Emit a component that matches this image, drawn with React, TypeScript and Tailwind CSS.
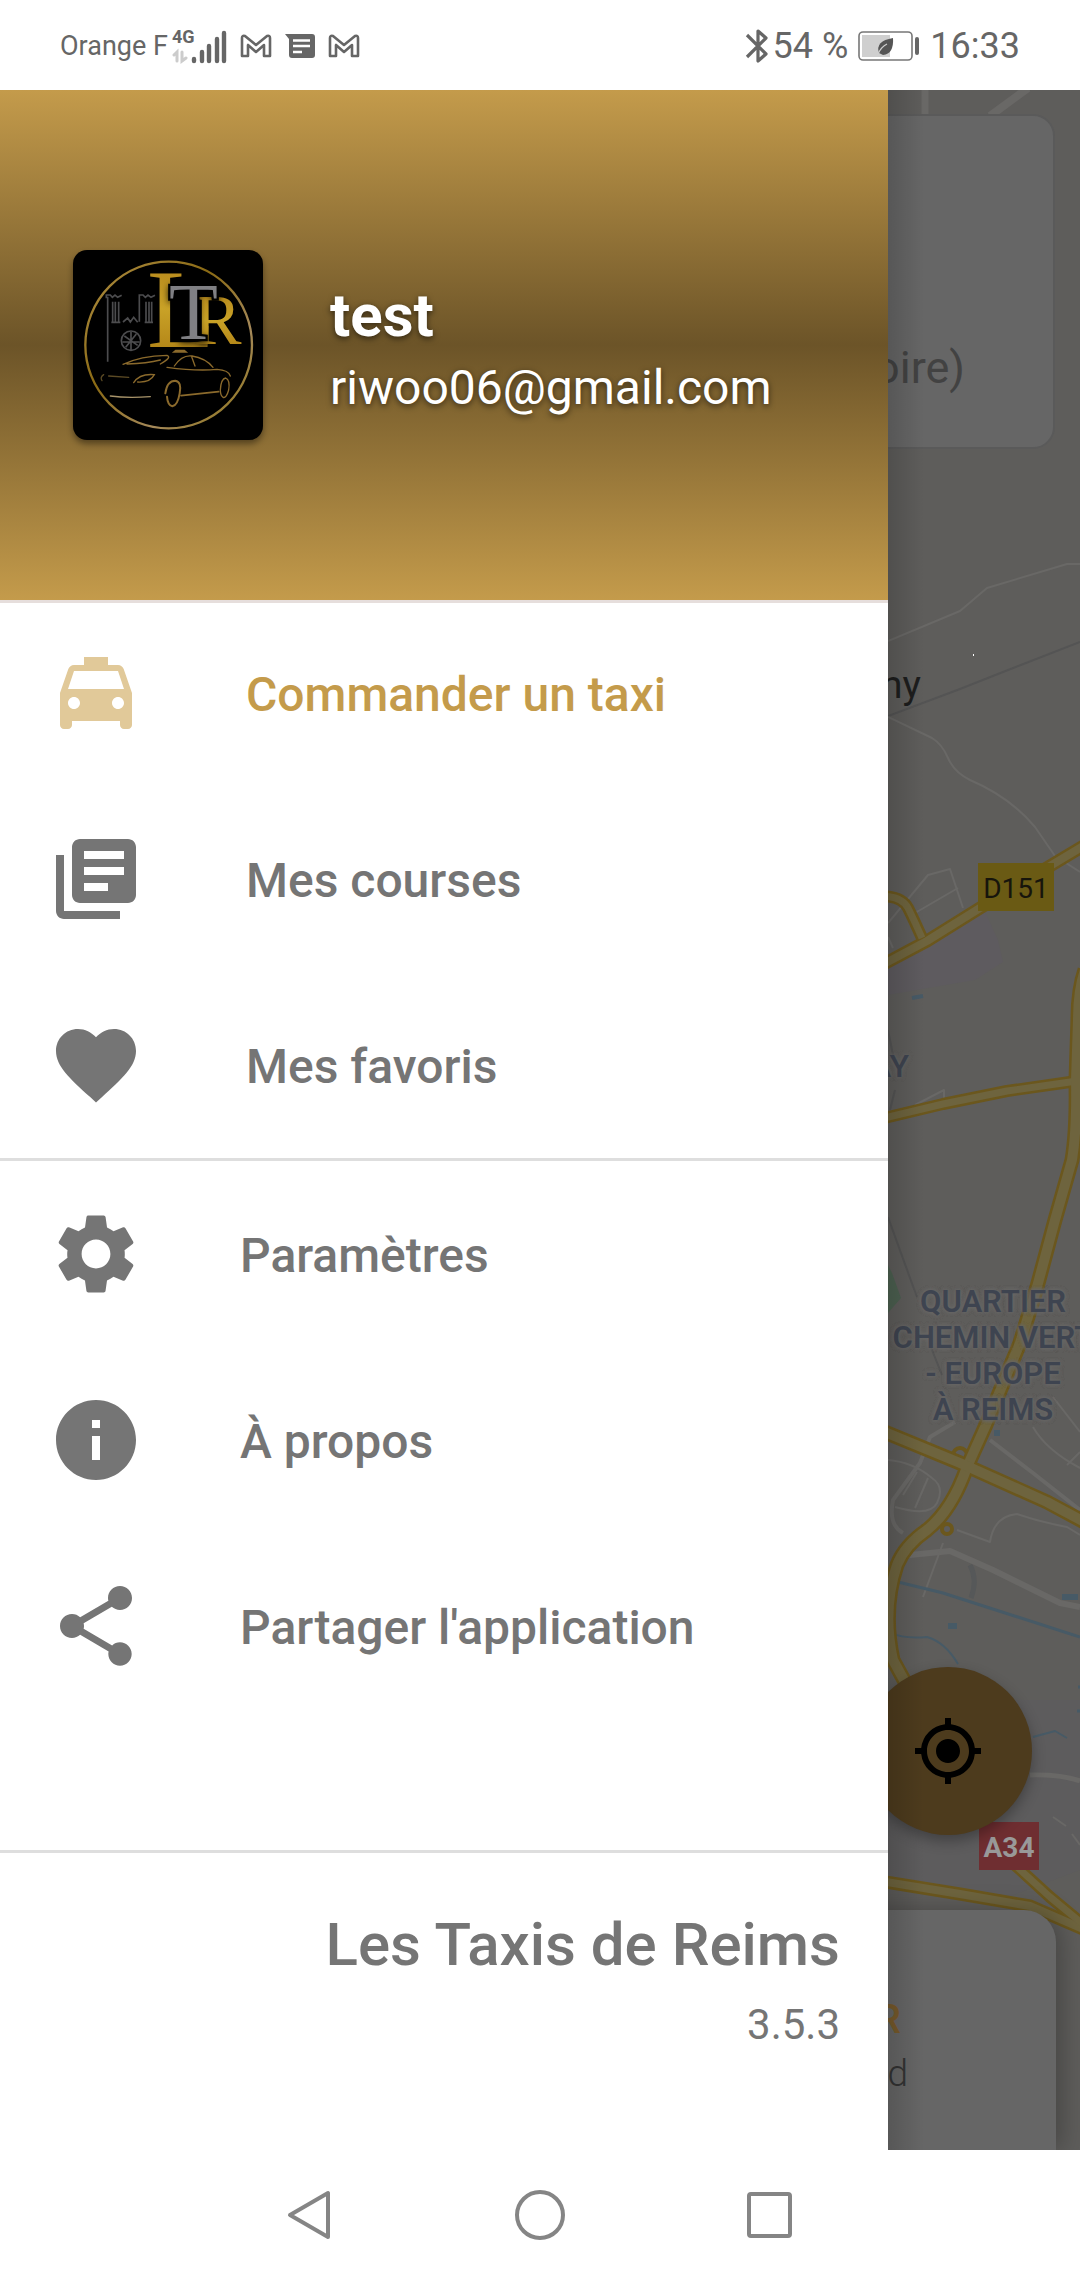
import type { ReactNode } from 'react';
import type { IconType } from 'react-icons';
import {
  MdFavorite,
  MdGpsFixed,
  MdInfo,
  MdLibraryBooks,
  MdLocalTaxi,
  MdSettings,
  MdShare,
} from 'react-icons/md';

type MenuItem = { label: string; icon: IconType; active?: boolean };

const coursesItems: MenuItem[] = [
  { label: 'Commander un taxi', icon: MdLocalTaxi, active: true },
  { label: 'Mes courses', icon: MdLibraryBooks },
  { label: 'Mes favoris', icon: MdFavorite },
];

const appItems: MenuItem[] = [
  { label: 'Paramètres', icon: MdSettings },
  { label: 'À propos', icon: MdInfo },
  { label: "Partager l'application", icon: MdShare },
];

// Routes principales (contour + remplissage)
const roads = [
  { d: 'M880 966 L927 941 L980 908 L1090 842', w: 13 },
  { d: 'M880 896 Q902 896 908 908 T922 938', w: 12 },
  { d: 'M880 1119 L943 1104 L1007 1091 L1077 1081', w: 12 },
  { d: 'M1085 970 Q1078 990 1078 1020 L1076 1080 Q1077 1130 1072 1160 L1055 1220 L1037 1287 L1020 1343 L985 1427 L967 1467 Q952 1510 927 1530 Q905 1545 897 1565 Q882 1610 893 1660 L915 1700', w: 15 },
  { d: 'M880 1430 L960 1463 L1047 1502 L1090 1525', w: 15 },
  { d: 'M880 1881 L960 1894 L1030 1906 L1090 1932', w: 13 },
  { d: 'M1015 1865 L1050 1897 L1090 1930', w: 12 },
];

const streets = [
  { d: 'M925 88 V116', w: 7 },
  { d: 'M990 116 L1028 88', w: 8 },
  { d: 'M888 641 L960 611 L987 588 L1067 564 H1080', w: 2 },
  { d: 'M888 717 L932 738 Q942 744 948 758 T970 780 Q1010 797 1035 827 L1055 856 L1080 872', w: 2 },
  { d: 'M888 923 L928 875 L950 869 L963 908 M915 913 L958 888 M888 937 L893 948', w: 2 },
  { d: 'M915 1105 L944 1090 V1100', w: 2 },
  { d: 'M990 1440 L1033 1473 L1080 1510', w: 4 },
  { d: 'M1033 1427 Q1046 1450 1080 1468 M1053 1397 L1080 1432 M1080 1452 L1067 1465', w: 2 },
  { d: 'M955 1422 L930 1437 L920 1463 L893 1500 Q888 1525 903 1533', w: 4 },
  { d: 'M888 1460 Q913 1462 932 1478 Q945 1487 937 1503 Q930 1517 895 1507 M928 1478 L915 1508 M917 1472 L903 1495', w: 2 },
  { d: 'M957 1530 L990 1542 Q994 1516 1017 1514 Q1040 1522 1067 1527 L1080 1535', w: 2 },
  { d: 'M900 1556 L950 1551 L993 1570 L1060 1603 L1080 1607', w: 6 },
  { d: 'M943 1543 L923 1597', w: 2 },
  { d: 'M1030 1775 Q1060 1774 1080 1781', w: 5 },
  { d: 'M1053 1817 L1066 1826 M1072 1834 L1080 1845', w: 2 },
];

const rivers = [
  { d: 'M898 1582 L943 1593 L1080 1637', w: 3 },
  { d: 'M893 1633 Q902 1639 927 1637 Q945 1642 958 1664', w: 2 },
  { d: 'M1033 1737 L1055 1731 L1067 1738', w: 2 },
  { d: 'M912 998 L923 996', w: 4 },
  { d: 'M948 1626 H957 M994 1433 H1000 M1062 1597 H1078', w: 6 },
  { d: 'M1078 1687 H1080 M1077 1711 H1080', w: 3 },
];

function MapCanvas() {
  return (
    <svg
      className="absolute inset-0 h-full w-full"
      viewBox="888 90 192 2060"
      preserveAspectRatio="xMinYMin slice"
      aria-hidden="true"
    >
      <rect x="888" y="90" width="192" height="2060" fill="#5e5d5b" />
      <path d="M888 965 L985 912 L998 940 L1003 962 L975 980 L888 995 Z" fill="#5e5b5f" />
      <path d="M888 1700 H1080 V1870 L1000 1900 L888 1880 Z" fill="#5d5c5d" />
      <path d="M888 1265 L892 1273 L901 1298 L888 1313 Z" fill="#4c6050" />
      <g fill="none" stroke="#545454" strokeWidth="2">
        <path d="M888 716 L960 689 L1003 672 L1080 642" />
        <path d="M888 1217 L910 1278 L917 1297 M930 1345 L942 1375 M888 1030 L893 1055 M890 1110 L895 1090" />
        <path d="M970 1565 Q978 1580 971 1598" strokeWidth="5" stroke="#565859" />
      </g>
      <g fill="none" stroke="#696866" strokeLinejoin="round">
        {streets.map((s) => (
          <path key={s.d} d={s.d} strokeWidth={s.w} />
        ))}
      </g>
      <g fill="none" stroke="#475a66" strokeLinejoin="round">
        {rivers.map((r) => (
          <path key={r.d} d={r.d} strokeWidth={r.w} />
        ))}
      </g>
      <g fill="none" stroke="#6b571d" strokeLinejoin="round">
        {roads.map((r) => (
          <path key={r.d} d={r.d} strokeWidth={r.w} />
        ))}
        <circle cx="960" cy="1455" r="7" strokeWidth="4" />
        <circle cx="947" cy="1529" r="5" strokeWidth="4" />
      </g>
      <g fill="none" stroke="#6e643e" strokeLinejoin="round">
        {roads.map((r) => (
          <path key={r.d} d={r.d} strokeWidth={r.w - 5} />
        ))}
      </g>
      <rect x="973" y="654" width="1" height="2" fill="#fff" />
    </svg>
  );
}

function MapLabel({ className, children }: { className: string; children: ReactNode }) {
  return <span className={`absolute whitespace-nowrap ${className}`}>{children}</span>;
}

function MapBackground() {
  return (
    <section className="relative flex-1 overflow-hidden bg-[#5e5d5b]" aria-label="Carte">
      <MapCanvas />

      <div className="absolute top-[24px] right-[25px] -left-10 h-[335px] rounded-[22px] border-2 border-[#5a5a5a] bg-[#666666]" />
      <MapLabel className="top-[251px] right-[115px] text-[45px] leading-[54px] text-[#424242]">oire)</MapLabel>
      <MapLabel className="top-[570px] right-[159px] text-[39px] leading-[50px] text-[#1d1d1d]">ny</MapLabel>
      <MapLabel className="top-[773px] left-[90px] flex h-[48px] w-[76px] items-center justify-center bg-[#6a5a14] pt-1 text-[28px] text-[#17150c]">
        D151
      </MapLabel>
      <MapLabel className="top-[958px] right-[171px] text-[32px] leading-[36px] font-medium text-[#3e4450] [text-shadow:0_0_4px_#676665,0_0_4px_#676665]">
        AY
      </MapLabel>
      <p className="absolute top-[1194px] left-[105px] -translate-x-1/2 text-center text-[31px] leading-[36px] font-semibold whitespace-nowrap text-[#3e4450] [text-shadow:0_0_4px_#676665,0_0_4px_#676665,0_0_4px_#676665]">
        QUARTIER
        <br />
        CHEMIN VERT
        <br />
        - EUROPE
        <br />À REIMS
      </p>
      <MapLabel className="top-[1732px] left-[91px] flex h-[48px] w-[60px] items-center justify-center bg-[#6f2e31] pt-1 text-[28px] font-bold text-[#999999]">
        A34
      </MapLabel>

      <button
        type="button"
        aria-label="Ma position"
        className="absolute top-[1577px] -left-6 flex h-[168px] w-[168px] items-center justify-center rounded-full bg-[#4d3b1d] shadow-[0_6px_14px_rgba(0,0,0,0.3)]"
      >
        <MdGpsFixed className="size-[72px] text-black" />
      </button>

      <div className="absolute top-[1820px] right-6 bottom-0 -left-10 rounded-tr-[32px] bg-[#666666] shadow-[6px_0_24px_rgba(0,0,0,0.25)]" />
      <MapLabel className="top-[1906px] right-[179px] text-[40px] leading-[48px] font-medium text-[#775a2b]">R</MapLabel>
      <MapLabel className="top-[1960px] right-[172px] text-[37px] leading-[48px] font-light text-[#333333]">d</MapLabel>

      {/* Ombre du tiroir */}
      <div className="absolute inset-y-0 left-0 w-9 bg-gradient-to-r from-black/15 to-transparent" />
    </section>
  );
}

function Logo() {
  return (
    <svg
      className="size-[190px] shrink-0 rounded-[14px] bg-black shadow-[0_4px_6px_rgba(0,0,0,0.4)]"
      viewBox="68 60 570 570"
      role="img"
      aria-label="LTR"
    >
      <defs>
        <linearGradient id="or" x1="0" y1="0" x2="1" y2="1">
          <stop offset="0" stopColor="#b08f45" />
          <stop offset="0.4" stopColor="#8a6a14" />
          <stop offset="0.7" stopColor="#a5895a" />
          <stop offset="1" stopColor="#8b7210" />
        </linearGradient>
        <linearGradient id="lettre" x1="0" y1="0" x2="0" y2="1">
          <stop offset="0" stopColor="#b07f18" />
          <stop offset="0.5" stopColor="#c9a227" />
          <stop offset="1" stopColor="#a87710" />
        </linearGradient>
      </defs>
      <circle cx="355" cy="345" r="250" fill="none" stroke="url(#or)" strokeWidth="7" />
      <g fill="none" stroke="#4c4c4e" strokeWidth="5">
        <path d="M172 395 V200 M168 205 V195 H180 L186 202 L194 195 L202 202 L214 196 M187 215 V276 M195 215 V276 M205 215 V276 M183 277 H210" />
        <path d="M218 276 L232 264 L240 276 L250 262 L262 277 M267 275 V200 M267 205 V195 H278 L285 202 L293 195 L302 202 L314 196 M287 215 V276 M296 215 V276 M304 215 V276 M283 277 H308" />
        <circle cx="242" cy="332" r="29" />
        <path d="M222 318 L262 346 M242 306 V360 M216 336 H268 M226 352 L258 312" />
      </g>
      <g fontFamily="'Liberation Serif', serif">
        <text x="290" y="350" fontSize="335" fill="url(#lettre)">L</text>
        <text x="430" y="343" fontSize="215" fill="url(#lettre)">R</text>
        <text x="356" y="328" fontSize="240" fill="#808084" stroke="#000" strokeWidth="14" paintOrder="stroke">T</text>
      </g>
      <g fill="none" stroke="#8b6a2c" strokeWidth="4" strokeLinecap="round">
        <path d="M218 403 Q270 378 350 376 Q366 382 330 402 M230 402 Q290 400 330 390" />
        <path d="M250 458 Q268 430 312 434 Q300 458 262 456" />
        <path d="M372 408 Q395 374 425 378 Q465 384 488 412 M424 380 L434 408" />
        <path d="M350 412 Q440 424 500 418 Q535 420 540 438" />
        <path d="M180 498 Q230 505 300 500" stroke="#a8946a" />
        <path d="M155 452 Q148 442 160 434 M175 438 L235 442" stroke="#5b4a24" />
        <path d="M345 490 Q350 452 375 452 Q395 456 388 490 Q382 526 366 529 Q352 526 350 500" strokeWidth="6" />
        <path d="M392 497 L505 485" strokeWidth="5" />
        <path d="M510 480 Q512 446 526 444 Q540 450 535 480 Q528 506 518 502 Q510 496 510 480" />
        <path d="M370 366 H408 L402 361 H376 Z" fill="#8b6a2c" />
      </g>
    </svg>
  );
}

function MenuRow({ item, gap }: { item: MenuItem; gap: string }) {
  const Icon = item.icon;
  return (
    <li>
      <a href="#" className={`flex h-[186px] items-center pl-12 ${gap}`}>
        <Icon className={`size-24 shrink-0 ${item.active ? 'text-[#e1c999]' : 'text-[#757575]'}`} />
        <span className={`pt-1 text-[48px] leading-[56px] font-medium ${item.active ? 'text-[#c49b4b]' : 'text-[#757575]'}`}>
          {item.label}
        </span>
      </a>
    </li>
  );
}

function Drawer() {
  return (
    <aside className="z-10 flex w-[calc(100%-192px)] shrink-0 flex-col bg-white">
      <header className="flex h-[510px] items-center gap-[67px] bg-[linear-gradient(to_bottom,#c49b4b,#6c5428,#c49b4b)] pl-[73px] text-white [text-shadow:0_2px_6px_rgba(0,0,0,0.6)]">
        <Logo />
        <div className="pt-3.5">
          <p className="text-[60px] leading-[72px] font-bold">test</p>
          <p className="text-[48px] leading-[72px]">riwoo06@gmail.com</p>
        </div>
      </header>

      <nav>
        <ul className="border-b-3 border-[#dedede] shadow-[inset_0_3px_0_#e6dedc]">
          {coursesItems.map((item) => (
            <MenuRow key={item.label} item={item} gap="gap-[102px]" />
          ))}
        </ul>
        <ul>
          {appItems.map((item) => (
            <MenuRow key={item.label} item={item} gap="gap-24" />
          ))}
        </ul>
      </nav>

      <footer className="mt-auto h-[300px] border-t-3 border-[#dedede] pt-14 pr-12 text-right text-[#757575]">
        <p className="text-[60px] leading-[72px] font-medium">Les Taxis de Reims</p>
        <p className="mt-2 text-[42px] leading-[72px]">3.5.3</p>
      </footer>
    </aside>
  );
}

function GmailIcon() {
  return (
    <svg className="h-6 w-8" viewBox="0 0 32 24" fill="none" stroke="#666" strokeWidth="2.6" strokeLinejoin="round">
      <path d="M2 22 V4 Q2 1 5 2 L16 11 L27 2 Q30 1 30 4 V22 H24 V11 L16 18 L8 11 V22 Z" />
    </svg>
  );
}

function StatusBar() {
  return (
    <div className="flex h-[90px] items-center justify-between bg-white px-[60px] pt-0.5 text-[#666666]">
      <div className="flex items-center">
        <span className="text-[27px] leading-8">Orange F</span>
        <div className="relative ml-1 h-9 w-14">
          <svg className="h-9 w-14" viewBox="0 0 56 36" fill="none" strokeLinecap="round" aria-hidden="true">
            <path d="M22 31 V33 M30 24 V33 M37 18 V33 M45 11 V33 M52 5 V33" stroke="#666" strokeWidth="4.4" />
            <path d="M5 33 V24 L2 27 M10 24 V33 L14 30" stroke="#ccc" strokeWidth="3" />
          </svg>
          <span className="absolute top-0 left-0 text-[18px] leading-[18px] font-bold">4G</span>
        </div>
        <div className="ml-3 flex items-center gap-3">
          <GmailIcon />
          <svg className="h-6 w-8" viewBox="0 0 32 24" aria-hidden="true">
            <path d="M1 0 H28 Q31 0 31 3 V21 Q31 24 28 24 H8 Q5 24 5 21 V5 Z" fill="#666" />
            <path d="M9 6.500 H26 M9 12 H26 M9 18 H18" stroke="#fff" strokeWidth="2.600" />
          </svg>
          <GmailIcon />
        </div>
      </div>

      <div className="flex items-center">
        <svg className="h-9 w-6" viewBox="0 0 24 36" fill="none" stroke="#666" strokeWidth="3.2" aria-hidden="true">
          <path d="M2 7 L21 26 L13 33 V3 L21 10 L2 29" strokeLinejoin="round" />
        </svg>
        <span className="ml-1 text-[36px] leading-10">54 %</span>
        <svg className="ml-2.5 h-[30px] w-[62px]" viewBox="0 0 62 30" aria-hidden="true">
          <rect x="1" y="1" width="53" height="28" rx="4" fill="#fff" stroke="#777" strokeWidth="1.6" />
          <rect x="4" y="4" width="28" height="22" fill="#cfcfcf" />
          <path d="M35 7 Q36 23 25 24 L21 22 Q17 10 35 7 Z" fill="#555" />
          <path d="M20 23 Q23 16 29 13" stroke="#cfcfcf" strokeWidth="1.2" fill="none" />
          <rect x="57" y="6" width="4" height="18" rx="2" fill="#666" />
        </svg>
        <span className="ml-2.5 text-[36px] leading-10">16:33</span>
      </div>
    </div>
  );
}

function NavigationBar() {
  return (
    <div className="flex h-[130px] items-center justify-center gap-[174px] bg-white">
      <button type="button" aria-label="Retour" className="size-14">
        <svg viewBox="0 0 56 56" fill="none" stroke="#858585" strokeWidth="4" strokeLinejoin="round">
          <path d="M46 6 V50 L8 28 Z" />
        </svg>
      </button>
      <button type="button" aria-label="Accueil" className="size-14">
        <svg viewBox="0 0 56 56" fill="none" stroke="#858585" strokeWidth="4">
          <circle cx="28" cy="28" r="23" />
        </svg>
      </button>
      <button type="button" aria-label="Applications récentes" className="size-14">
        <svg viewBox="0 0 56 56" fill="none" stroke="#858585" strokeWidth="4">
          <rect x="7" y="7" width="41" height="42" rx="2" />
        </svg>
      </button>
    </div>
  );
}

export default function App() {
  return (
    <div className="flex min-h-screen flex-col bg-white font-[Roboto,sans-serif]">
      <StatusBar />
      <main className="flex flex-1">
        <Drawer />
        <MapBackground />
      </main>
      <NavigationBar />
    </div>
  );
}
